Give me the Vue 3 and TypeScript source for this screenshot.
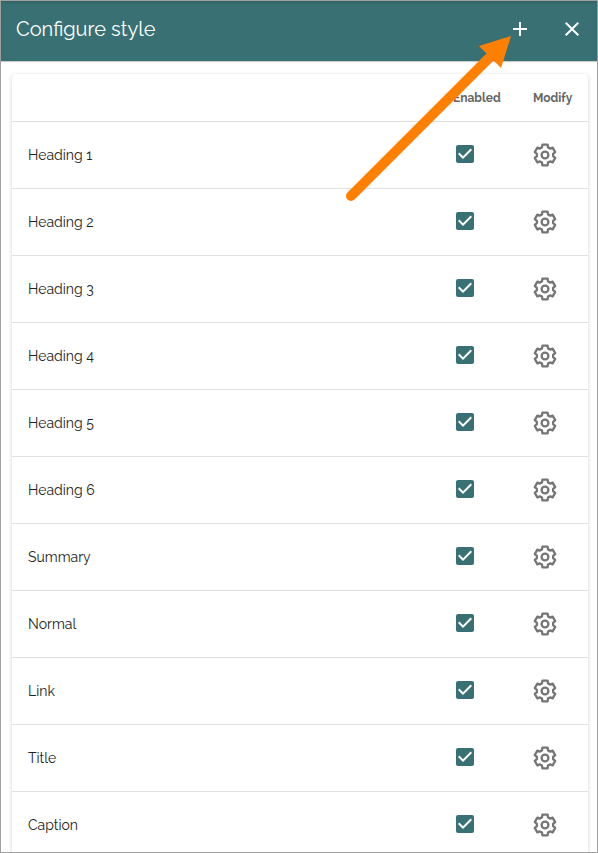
<script setup lang="ts">
import { ref } from 'vue'

interface StyleRow {
  name: string
  enabled: boolean
}

const names = [
  'Heading 1', 'Heading 2', 'Heading 3', 'Heading 4', 'Heading 5', 'Heading 6',
  'Summary', 'Normal', 'Link', 'Title', 'Caption',
]
const rows = ref<StyleRow[]>(names.map((name) => ({ name, enabled: true })))
</script>

<template>
  <div class="dialog">
    <header class="bar">
      <h1 class="title">Configure style</h1>
      <button class="icon-button" type="button" aria-label="Add">
        <svg viewBox="0 0 24 24" width="24" height="24"><path d="M19 13h-6v6h-2v-6H5v-2h6V5h2v6h6v2z" /></svg>
      </button>
      <button class="icon-button" type="button" aria-label="Close">
        <svg viewBox="0 0 24 24" width="24" height="24"><path d="M19 6.41L17.59 5 12 10.59 6.41 5 5 6.41 10.59 12 5 17.59 6.41 19 12 13.41 17.59 19 19 17.59 13.41 12z" /></svg>
      </button>
    </header>
    <main class="content">
      <div class="card">
        <table class="styles">
          <thead>
            <tr>
              <th class="name"></th>
              <th class="enabled">Enabled</th>
              <th class="modify">Modify</th>
            </tr>
          </thead>
          <tbody>
            <tr v-for="row in rows" :key="row.name">
              <td class="name">{{ row.name }}</td>
              <td class="enabled">
                <label class="check">
                  <input v-model="row.enabled" type="checkbox" :aria-label="row.name" />
                  <svg v-if="row.enabled" viewBox="3 3 18 18" width="18" height="18"><path d="M10 17l-5-5 1.41-1.41L10 14.17l7.59-7.59L19 8z" /></svg>
                </label>
              </td>
              <td class="modify">
                <button class="gear" type="button" :aria-label="'Modify ' + row.name">
                  <svg viewBox="-14 -14 28 28" width="28" height="28">
                    <path d="M-2.6-10.3H2.6L3-7.6Q4-7.1 5.09-6.39L7.61-7.4L10.22-2.89L8.08-1.21Q8.2 0 8.08 1.21L10.22 2.89L7.61 7.4L5.09 6.39Q4 7.1 3 7.6L2.6 10.3H-2.6L-3 7.6Q-4 7.1-5.09 6.39L-7.61 7.4L-10.22 2.89L-8.08 1.21Q-8.2 0-8.08-1.21L-10.22-2.89L-7.61-7.4L-5.09-6.39Q-4-7.1-3-7.6Z" />
                    <circle r="3.4" />
                  </svg>
                </button>
              </td>
            </tr>
          </tbody>
        </table>
      </div>
    </main>
    <svg class="pointer" viewBox="0 0 172 172" width="172" height="172" aria-hidden="true">
      <path d="M7 166L145 28" fill="none" stroke="#ff8000" stroke-width="10" stroke-linecap="round" />
      <path d="M167 6L135 16L157 38z" fill="#ff8000" />
    </svg>
  </div>
</template>

<style>
body {
  margin: 0;
}
</style>

<style scoped>
.dialog {
  position: relative;
  box-sizing: border-box;
  height: 100vh;
  overflow: hidden;
  display: flex;
  flex-direction: column;
  border: 1px solid #a0a0a0;
  background: #fff;
  color: #222;
  font-family: Raleway, Lato, "Open Sans", sans-serif;
}

.bar {
  flex: none;
  box-sizing: border-box;
  height: 60px;
  padding: 0 13px 4px 15px;
  display: flex;
  align-items: center;
  gap: 28px;
  background: #387073;
  color: #fff;
  box-shadow: 0 1px 1px rgba(0, 0, 0, 0.2), inset 0 2px 2px rgba(0, 0, 0, 0.1);
}

.title {
  flex: 1;
  margin: 0;
  font-size: 20px;
  line-height: 28px;
  font-weight: 400;
}

button {
  padding: 0;
  border: 0;
  background: none;
  color: inherit;
  cursor: pointer;
}

svg {
  display: block;
  fill: currentColor;
}

.content {
  flex: 1;
  min-height: 0;
  padding: 13px 9px 0 11px;
}

.card {
  border-radius: 4px;
  background: #fff;
  box-shadow: 0 1px 4px rgba(0, 0, 0, 0.18);
}

.styles {
  width: 100%;
  border-collapse: separate;
  border-spacing: 0;
  table-layout: fixed;
}

th,
td {
  box-sizing: border-box;
  padding: 0 16px;
  border-bottom: 1px solid #e0e0e0;
  text-align: left;
  vertical-align: middle;
}

th {
  height: 48px;
  font-size: 12px;
  font-weight: 700;
  color: #666;
}

td {
  height: 67px;
  font-size: 14px;
  line-height: 20px;
}

th.enabled {
  width: 80px;
}

th.modify {
  width: 71px;
}

td.enabled {
  padding: 0 19px;
}

td.modify {
  padding: 0 14px;
}

.check {
  display: grid;
  width: 18px;
  height: 18px;
  margin-bottom: 2px;
}

.check input,
.check svg {
  grid-area: 1 / 1;
}

.check input {
  appearance: none;
  width: 18px;
  height: 18px;
  margin: 0;
  border: 2px solid #387073;
  border-radius: 2px;
}

.check input:checked {
  background: #387073;
}

.check svg {
  color: #fff;
  pointer-events: none;
}

.gear {
  display: block;
  color: #757575;
}

.gear svg {
  fill: none;
  stroke: currentColor;
  stroke-width: 2.3;
  stroke-linejoin: round;
}

.pointer {
  position: absolute;
  top: 29px;
  left: 343px;
  pointer-events: none;
}
</style>
